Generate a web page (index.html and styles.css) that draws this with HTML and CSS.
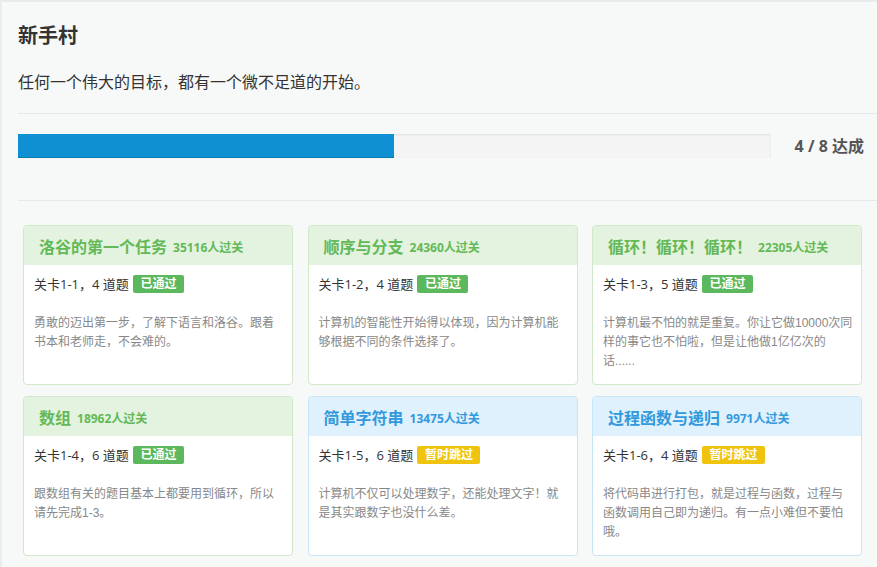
FILE: index.html
```html
<!DOCTYPE html>
<html lang="zh-CN">
<head>
<meta charset="utf-8">
<title>新手村</title>
<link rel="stylesheet" href="styles.css">
</head>
<body>
<div class="page">
  <h1 class="title">新手村</h1>
  <p class="subtitle">任何一个伟大的目标，都有一个微不足道的开始。</p>
  <hr class="rule">
  <div class="progress-row">
    <div class="progress"><div class="progress-bar" style="width:50%"></div></div>
    <div class="progress-text">4 / 8 达成</div>
  </div>
  <hr class="rule rule-2">

  <div class="grid">
    <div class="card card-green">
      <div class="card-head"><span class="card-title">洛谷的第一个任务</span><span class="card-count">35116人过关</span></div>
      <div class="card-body">
        <div class="level">关卡1-1，4 道题<span class="badge badge-pass">已通过</span></div>
        <p class="desc">勇敢的迈出第一步，了解下语言和洛谷。跟着书本和老师走，不会难的。</p>
      </div>
    </div>
    <div class="card card-green">
      <div class="card-head"><span class="card-title">顺序与分支</span><span class="card-count">24360人过关</span></div>
      <div class="card-body">
        <div class="level">关卡1-2，4 道题<span class="badge badge-pass">已通过</span></div>
        <p class="desc">计算机的智能性开始得以体现，因为计算机能够根据不同的条件选择了。</p>
      </div>
    </div>
    <div class="card card-green">
      <div class="card-head"><span class="card-title">循环！循环！循环！</span><span class="card-count">22305人过关</span></div>
      <div class="card-body">
        <div class="level">关卡1-3，5 道题<span class="badge badge-pass">已通过</span></div>
        <p class="desc">计算机最不怕的就是重复。你让它做10000次同样的事它也不怕啦，但是让他做1亿亿次的话......</p>
      </div>
    </div>
    <div class="card card-green">
      <div class="card-head"><span class="card-title">数组</span><span class="card-count">18962人过关</span></div>
      <div class="card-body">
        <div class="level">关卡1-4，6 道题<span class="badge badge-pass">已通过</span></div>
        <p class="desc">跟数组有关的题目基本上都要用到循环，所以请先完成1-3。</p>
      </div>
    </div>
    <div class="card card-blue">
      <div class="card-head"><span class="card-title">简单字符串</span><span class="card-count">13475人过关</span></div>
      <div class="card-body">
        <div class="level">关卡1-5，6 道题<span class="badge badge-skip">暂时跳过</span></div>
        <p class="desc">计算机不仅可以处理数字，还能处理文字！就是其实跟数字也没什么差。</p>
      </div>
    </div>
    <div class="card card-blue">
      <div class="card-head"><span class="card-title">过程函数与递归</span><span class="card-count">9971人过关</span></div>
      <div class="card-body">
        <div class="level">关卡1-6，4 道题<span class="badge badge-skip">暂时跳过</span></div>
        <p class="desc">将代码串进行打包，就是过程与函数，过程与函数调用自己即为递归。有一点小难但不要怕哦。</p>
      </div>
    </div>
    <div class="card card-blue">
      <div class="card-head"><span class="card-title">Part 1 入门综合练习</span><span class="card-count">8021人过关</span></div>
      <div class="card-body">
        <div class="level">关卡1-7，5 道题<span class="badge badge-skip">暂时跳过</span></div>
        <p class="desc">把前面学到的东西综合起来练习一下吧。</p>
      </div>
    </div>
    <div class="card card-gray">
      <div class="card-head"><span class="card-title">Part 2 基础算法</span><span class="card-count">6012人过关</span></div>
      <div class="card-body">
        <div class="level">关卡2-1，5 道题</div>
        <p class="desc">开始学习一些简单的算法。</p>
      </div>
    </div>
  </div>
</div>
</body>
</html>
```

FILE: styles.css
```css
html, body {
  margin: 0;
  padding: 0;
  background: #f7f8f8;
}

body {
  font-family: "Open Sans", "Noto Sans CJK SC", sans-serif;
  color: #333;
}

.page {
  border-top: 2px solid #e8eaeb;
  border-left: 2px solid #eaeced;
  padding: 20px 0 40px 16px;
  min-height: 600px;
  background: #f7f8f8;
}

.title {
  margin: 0;
  font-size: 20px;
  line-height: 28px;
  font-weight: bold;
  color: #333;
}

.subtitle {
  margin: 20px 0 0;
  font-size: 16px;
  line-height: 24px;
  color: #333;
}

.rule {
  border: 0;
  border-top: 1px solid #e6e8e9;
  height: 0;
  margin: 19px 0 0;
}

.rule-2 {
  margin-top: 42px;
}

.progress-row {
  display: flex;
  align-items: center;
  margin-top: 20px;
  padding-right: 13px;
}

.progress {
  flex: 1;
  height: 24px;
  background: #f4f4f4;
  box-shadow: inset 0 1px 2px rgba(0, 0, 0, 0.08);
}

.progress-bar {
  height: 100%;
  background: #0f90d2;
  box-shadow: inset 0 -1px 0 rgba(0, 0, 0, 0.15);
}

.progress-text {
  margin-left: 24px;
  font-size: 16px;
  font-weight: bold;
  color: #555;
  line-height: 24px;
  white-space: nowrap;
}

.grid {
  display: grid;
  grid-template-columns: repeat(3, 270px);
  column-gap: 14.5px;
  row-gap: 11px;
  margin: 24px 0 0 5px;
}

.card {
  background: #fff;
  border: 1px solid #ddd;
  border-radius: 4px;
  overflow: hidden;
  display: flex;
  flex-direction: column;
}

.card-head {
  height: 39px;
  display: flex;
  align-items: center;
  padding: 0 10px 0 15px;
  white-space: nowrap;
}

.card-title {
  font-size: 16px;
  font-weight: bold;
}

.card-count {
  font-size: 12px;
  font-weight: bold;
  margin-left: 6px;
  padding-top: 2px;
}

.card-green {
  border-color: #cfe9c9;
}
.card-green .card-head {
  background: #e3f3df;
  color: #63b957;
}

.card-blue {
  border-color: #c6e5f7;
}
.card-blue .card-head {
  background: #dff1fc;
  color: #3399dd;
}

.card-gray .card-head {
  background: #f5f5f5;
  color: #666;
}

.card-body {
  flex: 1;
  padding: 10px 7px 13px 10px;
}

.level {
  font-size: 13px;
  line-height: 18px;
  color: #333;
  display: flex;
  align-items: center;
}

.badge {
  margin-left: 4px;
  height: 18px;
  line-height: 18px;
  padding: 0 7.5px;
  border-radius: 2px;
  font-size: 12px;
  font-weight: bold;
  color: #fff;
}

.badge-pass {
  background: #5cb85c;
}

.badge-skip {
  background: #f0c30f;
}

.desc {
  margin: 21px 0 0;
  font-family: "Liberation Sans", "Noto Sans CJK SC", sans-serif;
  font-size: 12px;
  line-height: 19px;
  color: #888;
}
```
